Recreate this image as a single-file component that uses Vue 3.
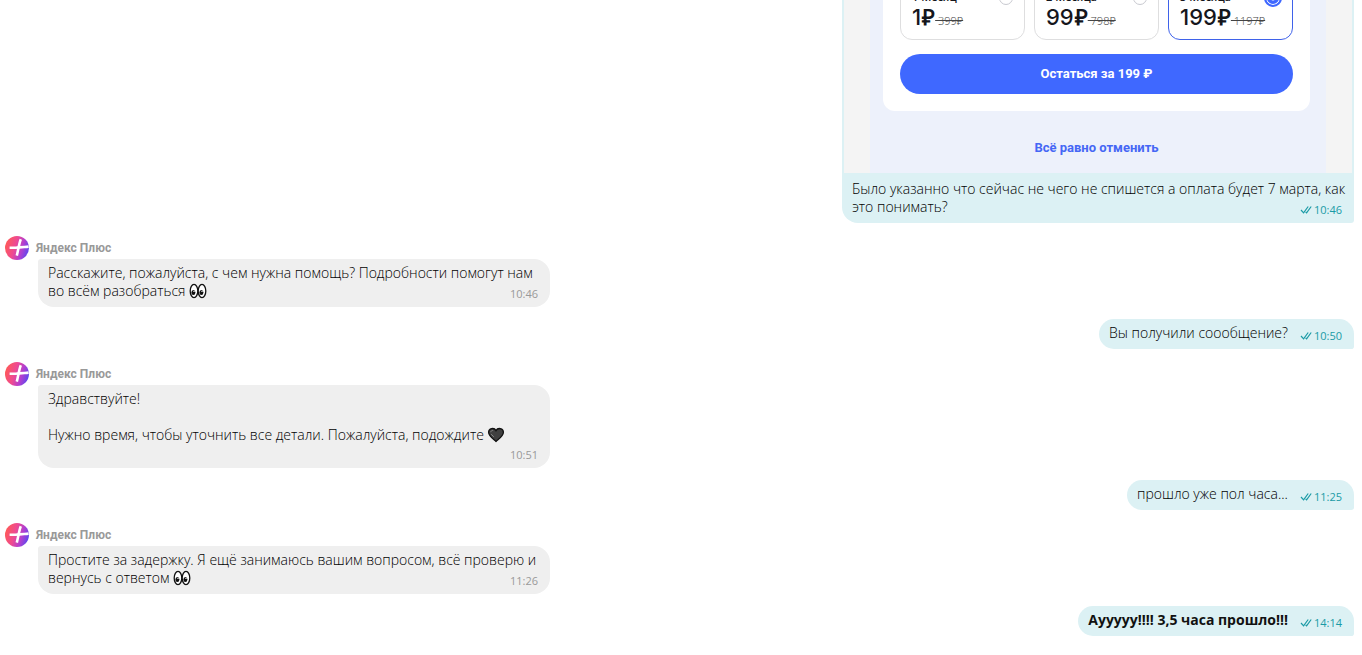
<script setup>
const plans = [
  { label: '1 Месяц', price: '1', old: '399', value: 1, active: false },
  { label: '2 Месяца', price: '99', old: '798', value: 2, active: false },
  { label: '3 Месяца', price: '199', old: '1197', value: 3, active: true },
]

const messages = [
  { id: 1, from: 'support', lines: ['Расскажите, пожалуйста, с чем нужна помощь? Подробности помогут нам', 'во всём разобраться'], icon: 'eyes', time: '10:46' },
  { id: 2, from: 'me', lines: ['Вы получили соообщение?'], time: '10:50' },
  { id: 3, from: 'support', lines: ['Здравствуйте!', '', 'Нужно время, чтобы уточнить все детали. Пожалуйста, подождите'], icon: 'heart', time: '10:51', footer: true },
  { id: 4, from: 'me', lines: ['прошло уже пол часа...'], time: '11:25' },
  { id: 5, from: 'support', lines: ['Простите за задержку. Я ещё занимаюсь вашим вопросом, всё проверю и', 'вернусь с ответом'], icon: 'eyes', time: '11:26' },
  { id: 6, from: 'me', lines: ['Аууууу!!!! 3,5 часа прошло!!!'], time: '14:14', strong: true },
]
</script>

<template>
  <main class="chat">
    <article class="bubble mine wide">
      <div class="photo">
        <div class="screen">
          <section class="offer">
            <div class="plans">
              <label v-for="plan in plans" :key="plan.value" class="plan" :class="{ active: plan.active }">
                <span class="plan-head">
                  <span>{{ plan.label }}</span>
                  <input class="radio" type="radio" name="plan" :value="plan.value" :checked="plan.active" />
                </span>
                <span class="plan-price">
                  <strong>{{ plan.price }}<span class="ruble">₽</span></strong>
                  <s>&nbsp;{{ plan.old }}₽</s>
                </span>
              </label>
            </div>
            <button class="stay" type="button">Остаться за 199 ₽</button>
          </section>
          <a class="cancel" href="#">Всё равно отменить</a>
        </div>
      </div>
      <div class="content">
        <p class="text">
          <span class="line">Было указанно что сейчас не чего не спишется а оплата будет 7 марта, как</span>
          <span class="line">это понимать?</span>
        </p>
        <span class="meta">
          <svg class="ticks" viewBox="0 0 12 10" aria-hidden="true">
            <path d="M1 5 3.6 7.8 8.2 1.5M5.6 6.8 6.6 7.8 11.2 1.5" />
          </svg>
          <time>10:46</time>
        </span>
      </div>
    </article>

    <template v-for="m in messages" :key="m.id">
      <article v-if="m.from === 'support'" class="support">
        <header class="author">
          <svg class="avatar" viewBox="0 0 24 24" aria-hidden="true">
            <defs>
              <linearGradient :id="'plus' + m.id" x1="0" y1="0.35" x2="1" y2="0.65">
                <stop offset="0" stop-color="#ff5a55" />
                <stop offset="0.4" stop-color="#ee4a92" />
                <stop offset="0.7" stop-color="#b23fd0" />
                <stop offset="1" stop-color="#5a48ee" />
              </linearGradient>
            </defs>
            <circle cx="12" cy="12" r="12" :fill="'url(#plus' + m.id + ')'" />
            <path d="M15.8 3.2C14.2 7 13.4 13 11.8 19.6" fill="none" stroke="#fff" stroke-width="2.6" />
            <path d="M4.6 11.8C10 11.8 16 11.2 23.6 10.6" fill="none" stroke="#fff" stroke-width="2.6" />
          </svg>
          <span class="name">Яндекс Плюс</span>
        </header>
        <div class="bubble theirs">
          <div class="content">
            <p class="text" :class="{ footer: m.footer }">
              <span v-for="(line, i) in m.lines" :key="i" class="line">{{ line }}<template v-if="i === m.lines.length - 1">{{ ' ' }}<svg v-if="m.icon === 'eyes'" class="emoji" viewBox="0 0 18 16" role="img" aria-label="Глаза">
                  <ellipse cx="5" cy="8" rx="3.8" ry="6.6" fill="#fff" stroke="#111" stroke-width="1.3" />
                  <ellipse cx="13" cy="8" rx="3.8" ry="6.6" fill="#fff" stroke="#111" stroke-width="1.3" />
                  <ellipse cx="4.4" cy="9.4" rx="2" ry="2.5" fill="#111" />
                  <ellipse cx="12.4" cy="9.4" rx="2" ry="2.5" fill="#111" />
                  <circle cx="5" cy="8.4" r="0.7" fill="#fff" />
                  <circle cx="13" cy="8.4" r="0.7" fill="#fff" />
                </svg>
                <svg v-else class="emoji" viewBox="0 0 18 16" role="img" aria-label="Чёрное сердце">
                  <path d="M9 14.4C6.6 12.2 1.6 9 1.6 5.2C1.6 1.2 7.2.2 9 3.6C10.8.2 16.4 1.2 16.4 5.2C16.4 9 11.4 12.2 9 14.4Z" fill="#404040" stroke="#111" stroke-width="1.3" />
                  <path d="M3.8 5.2C4 3.6 5.2 3.2 6.2 3.6M4.2 7.2 6.8 9.8" fill="none" stroke="#888" stroke-width="1" />
                </svg>
              </template></span>
            </p>
            <span class="meta"><time>{{ m.time }}</time></span>
          </div>
        </div>
      </article>

      <article v-else class="bubble mine">
        <div class="content single">
          <p class="text" :class="{ strong: m.strong }"><span class="line">{{ m.lines[0] }}</span></p>
          <span class="meta">
            <svg class="ticks" viewBox="0 0 12 10" aria-hidden="true">
              <path d="M1 5 3.6 7.8 8.2 1.5M5.6 6.8 6.6 7.8 11.2 1.5" />
            </svg>
            <time>{{ m.time }}</time>
          </span>
        </div>
      </article>
    </template>
  </main>
</template>

<style>
body {
  background: #fff;
}
</style>

<style scoped>
.chat {
  display: flex;
  flex-direction: column;
  align-items: flex-start;
  gap: 12px;
  padding: 0 8px 19px 5px;
  font-family: "Open Sans", "Noto Sans", sans-serif;
  font-size: 14px;
  font-weight: 300;
  line-height: 18px;
  color: #000;
}

.bubble {
  box-sizing: border-box;
  max-width: 100%;
}

.mine {
  align-self: flex-end;
  background: #dcf1f4;
  border-radius: 16px 16px 3px 16px;
}

.wide {
  width: 512px;
  border-radius: 0 0 3px 16px;
}

.photo {
  margin: 0 2px;
  padding: 0 26px;
  background: #f4f4f4;
  overflow: hidden;
}

.screen {
  display: flex;
  flex-direction: column;
  align-items: center;
  padding: 0 16px 14px 13px;
  background: #edf1fb;
  font-weight: 600;
}

.offer {
  box-sizing: border-box;
  width: 100%;
  margin-top: -39px;
  padding: 22px 17px 17px;
  background: #fff;
  border-radius: 12px;
}

.plans {
  display: grid;
  grid-template-columns: repeat(3, 1fr);
  gap: 9px;
}

.plan {
  display: flex;
  flex-direction: column;
  padding: 7px 11px 13px;
  border: 1px solid #dededf;
  border-radius: 12px;
  color: #15161c;
}

.plan.active {
  border-color: #3f62ea;
}

.plan-head {
  display: flex;
  justify-content: space-between;
  align-items: flex-start;
  height: 15px;
  font-size: 11px;
  line-height: 12px;
}

.radio {
  appearance: none;
  box-sizing: border-box;
  width: 14px;
  height: 14px;
  margin: 0;
  border: 1px solid #c8c9d0;
  border-radius: 50%;
  background: #fff;
}

.radio:checked {
  width: 18px;
  height: 18px;
  margin: -2px -1px 0 0;
  border: 2px solid #3f68ff;
  box-shadow: inset 0 0 0 1px #fff;
  background: radial-gradient(circle, #fff 2px, #3f68ff 3px);
}

.plan-price {
  display: flex;
  align-items: baseline;
  height: 20px;
  line-height: 20px;
}

.plan-price strong {
  font: 500 22px/20px Inter, "Open Sans", sans-serif;
}

.plan-price .ruble {
  margin-left: 1px;
  font-family: "Open Sans", sans-serif;
  font-weight: 600;
}

.plan-price s {
  font-size: 11px;
  font-weight: 300;
  color: #444;
}

.stay {
  display: block;
  width: 100%;
  height: 40px;
  margin-top: 14px;
  border: 0;
  border-radius: 20px;
  background: #3f68ff;
  color: #fff;
  font: 700 13px/18px Roboto, "Noto Sans", sans-serif;
}

.cancel {
  margin-top: 26px;
  font: 700 13px/22px Roboto, "Noto Sans", sans-serif;
  color: #4567f5;
  text-decoration: none;
}

.content {
  display: grid;
  grid-template-columns: minmax(0, 1fr);
  padding: 5px 12px 5px 10px;
}

.wide .content {
  padding-top: 7px;
}

.text,
.meta {
  grid-area: 1 / 1;
}

.text {
  margin: 0;
  padding-bottom: 2px;
}

.text.footer {
  padding-bottom: 19px;
}

.text.strong {
  font-weight: 700;
  color: #111;
}

.line {
  display: block;
  min-height: 18px;
  white-space: nowrap;
}

.single {
  grid-template-columns: auto auto;
  gap: 12px;
}

.single .meta {
  grid-area: 1 / 2;
}

.meta {
  display: flex;
  align-items: center;
  gap: 2px;
  align-self: end;
  justify-self: end;
  font-size: 11px;
  font-weight: 400;
  line-height: 16px;
  color: #999;
}

.mine .meta {
  color: #1a9ba6;
}

.ticks {
  width: 12px;
  height: 10px;
  fill: none;
  stroke: currentColor;
  stroke-width: 1.2;
}

.support {
  width: 545px;
  max-width: 100%;
}

.author {
  box-sizing: border-box;
  display: flex;
  align-items: center;
  gap: 7px;
  height: 24px;
  padding-top: 2px;
}

.avatar {
  width: 24px;
  height: 24px;
}

.name {
  font-family: Roboto, "Noto Sans", sans-serif;
  font-size: 12px;
  font-weight: 700;
  color: #999;
}

.theirs {
  margin-left: 33px;
  background: #efefef;
  border-radius: 3px 16px 16px 16px;
}

.emoji {
  width: 18px;
  height: 16px;
  vertical-align: -3px;
}
</style>
